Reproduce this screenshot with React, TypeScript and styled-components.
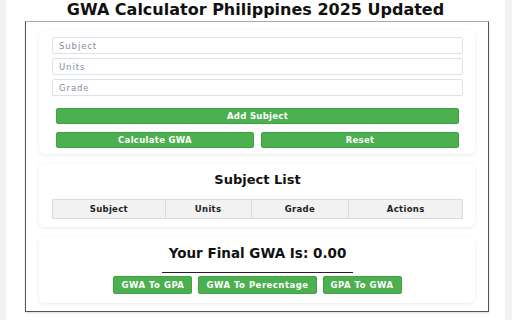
import React, { useState } from 'react';
import styled, { createGlobalStyle } from 'styled-components';

const GlobalStyle = createGlobalStyle`
  html, body {
    margin: 0;
    padding: 0;
    background: #f1f1f1;
    font-family: 'DejaVu Sans', 'Open Sans', sans-serif;
    overflow: hidden;
  }
`;

const Page = styled.div`
  margin: 0 7px 0 6px;
  background: #ffffff;
  min-height: 340px;
  padding-top: 1px;
`;

const Title = styled.h1`
  margin: 0 0 2px;
  text-align: center;
  font-size: 16px;
  font-weight: 700;
  color: #111111;
  line-height: 18px;
`;

const Frame = styled.div`
  width: 436px;
  margin: 0 0 0 19px;
  border: 1.5px solid #555;
  border-top-color: #aaa;
  padding: 8px 13px 8px 13px;
  display: flex;
  flex-direction: column;
  gap: 10px;
  box-shadow: 0 1px 2px rgba(0, 0, 0, 0.15);
`;

const Card = styled.div<{ pad?: string }>`
  background: #fff;
  border-radius: 6px;
  box-shadow: 0 1px 4px rgba(0, 0, 0, 0.09);
  padding: ${({ pad }) => pad || '7px 12px 6px 13px'};
`;

const Fields = styled.div`
  display: flex;
  flex-direction: column;
  gap: 4px;
`;

const Input = styled.input`
  box-sizing: border-box;
  width: 100%;
  height: 17px;
  margin: 0;
  border: 1px solid #dde2ea;
  border-radius: 2px;
  padding: 0 6px;
  font-family: inherit;
  font-size: 8.5px;
  letter-spacing: 0.9px;
  outline: none;
  &::placeholder {
    color: #858a9c;
  }
`;

const GreenButton = styled.button`
  box-sizing: border-box;
  height: 16px;
  border: 1px solid #3ea443;
  border-radius: 2px;
  background: #4caf50;
  color: #fff;
  font-family: inherit;
  font-size: 8.5px;
  font-weight: 700;
  letter-spacing: 0.3px;
  padding: 0;
  cursor: pointer;
`;

const WideButton = styled(GreenButton)`
  width: 403px;
  margin: 12px 0 0 4px;
  display: block;
`;

const ButtonRow = styled.div`
  display: grid;
  grid-template-columns: 1fr 1fr;
  gap: 7px;
  margin: 8px 4px 0 4px;
`;

const SectionTitle = styled.h2`
  margin: 2px 0 12px;
  text-align: center;
  font-size: 13px;
  font-weight: 700;
  color: #111;
  line-height: 15px;
`;

const Table = styled.table`
  width: 100%;
  border-collapse: collapse;
  margin-bottom: 0;
`;

const Th = styled.th<{ w: number }>`
  width: ${({ w }) => w}px;
  background: #f2f2f2;
  border: 1px solid #dcdcdc;
  font-size: 8.5px;
  font-weight: 700;
  letter-spacing: 0.3px;
  color: #222;
  height: 18px;
  padding: 0;
`;

const Result = styled.div`
  text-align: center;
  font-size: 13.5px;
  font-weight: 700;
  color: #111;
  margin-top: 6px;
  line-height: 16px;
`;

const Divider = styled.hr`
  width: 191px;
  margin: 11px auto 3px;
  border: none;
  border-top: 1px solid #222;
`;

const ConvertRow = styled.div`
  display: flex;
  justify-content: center;
  gap: 6px;
`;

const ConvertButton = styled(GreenButton)`
  height: 18px;
  padding: 0 7px;
  font-size: 8.5px;
  letter-spacing: 0.5px;
  border-radius: 2px;
`;

const Below = styled.h2`
  margin: 8px 0 0 76px;
  font-size: 16px;
  font-weight: 700;
  color: #222;
`;

export default function App() {
  const [gwa] = useState('0.00');
  return (
    <>
      <GlobalStyle />
      <Page>
        <Title>GWA Calculator Philippines 2025 Updated</Title>
        <Frame>
          <Card>
            <Fields>
              <Input placeholder="Subject" />
              <Input placeholder="Units" />
              <Input placeholder="Grade" />
            </Fields>
            <WideButton>Add Subject</WideButton>
            <ButtonRow>
              <GreenButton>Calculate GWA</GreenButton>
              <GreenButton>Reset</GreenButton>
            </ButtonRow>
          </Card>
          <Card pad="6px 12px 8px 13px">
            <SectionTitle>Subject List</SectionTitle>
            <Table>
              <thead>
                <tr>
                  <Th w={113}>Subject</Th>
                  <Th w={86}>Units</Th>
                  <Th w={98}>Grade</Th>
                  <Th w={114}>Actions</Th>
                </tr>
              </thead>
            </Table>
          </Card>
          <Card pad="2px 12px 9px 13px">
            <Result>Your Final GWA Is: {gwa}</Result>
            <Divider />
            <ConvertRow>
              <ConvertButton>GWA To GPA</ConvertButton>
              <ConvertButton>GWA To Perecntage</ConvertButton>
              <ConvertButton>GPA To GWA</ConvertButton>
            </ConvertRow>
          </Card>
        </Frame>
        <Below>How to Calculate Your GWA</Below>
      </Page>
    </>
  );
}
